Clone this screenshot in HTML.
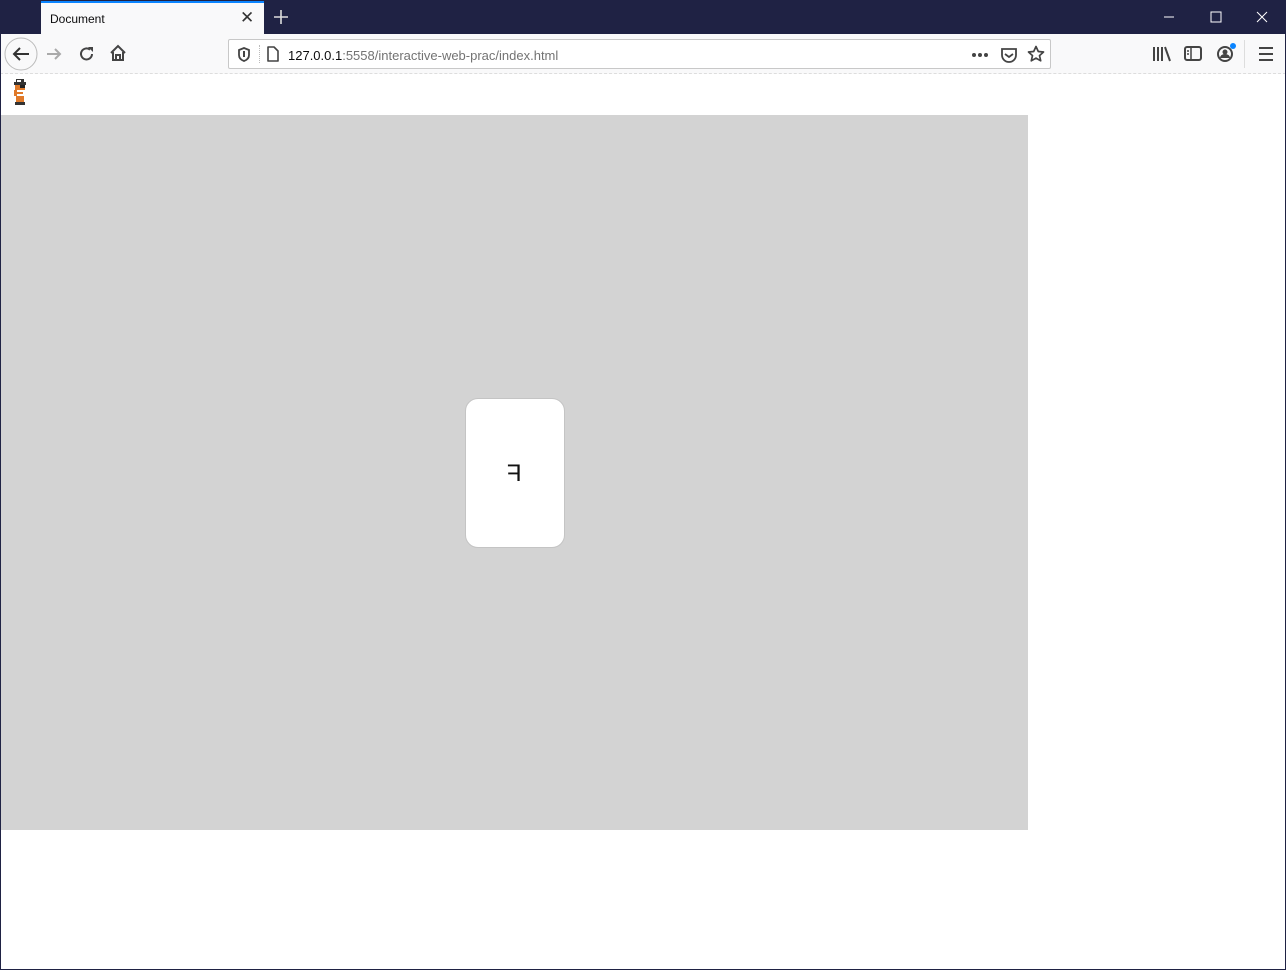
<!DOCTYPE html>
<html><head><meta charset="utf-8"><style>
*{margin:0;padding:0;box-sizing:border-box}
html,body{width:1286px;height:970px;overflow:hidden;background:#fff;font-family:"Liberation Sans",sans-serif}
.win{position:absolute;left:0;top:0;width:1286px;height:970px}
.frame{position:absolute;left:0;top:0;width:1286px;height:970px;border:1px solid #1f2244;pointer-events:none}
.title{position:absolute;left:0;top:0;width:1286px;height:34px;background:#1f2244}
.tab{position:absolute;left:41px;top:1px;width:223px;height:33px;background:#f9f9fa;border-top:2px solid #0a84ff}
.tab span{position:absolute;left:9px;top:9px;font-size:12px;color:#0c0c0d}
.tab .x{position:absolute;left:199px;top:5px;font-size:17px;color:#333;font-weight:normal}
.toolbar{position:absolute;left:0;top:34px;width:1286px;height:40px;background:#f9f9fa;border-bottom:1px dashed #ddd}
.url{position:absolute;left:228px;top:39px;width:823px;height:30px;background:#fff;border:1px solid #c8c8c8;border-radius:2px}
.url .t{position:absolute;left:59px;top:8px;font-size:13px;color:#737373}
.url .t b{font-weight:normal;color:#0c0c0d}
.gray{position:absolute;left:1px;top:115px;width:1027px;height:715px;background:#d3d3d3}
.card{position:absolute;left:464px;top:283px;width:100px;height:150px;background:#fff;border-radius:13px;border:1px solid #c4c4c4}
.card span{position:absolute;left:41px;top:61px;font-size:24px;transform:scaleX(-1);color:#111}
svg{position:absolute}
</style></head><body>
<div class="win">
<div class="title">
<div class="tab"><span>Document</span><span class="x">✕</span></div>
<svg style="left:273px;top:9px" width="16" height="16"><path d="M8 1v14M1 8h14" stroke="#ddd" stroke-width="1.6"/></svg>
<svg style="left:1163px;top:12px" width="12" height="10"><path d="M1 5h10" stroke="#fff"/></svg>
<svg style="left:1210px;top:11px" width="12" height="12"><rect x="1" y="1" width="10" height="10" fill="none" stroke="#fff"/></svg>
<svg style="left:1256px;top:11px" width="12" height="12"><path d="M1 1l10 10M11 1L1 11" stroke="#fff"/></svg>
</div>
<div class="toolbar">
<svg style="left:4px;top:3px" width="34" height="34"><circle cx="17" cy="17" r="16" fill="#f9f9fa" stroke="#bbb"/><path d="M25 17H10M16 11l-6 6 6 6" stroke="#333" stroke-width="2" fill="none"/></svg>
<svg style="left:45px;top:11px" width="18" height="18"><path d="M2 9h13M10 4l5 5-5 5" stroke="#aaa" stroke-width="2" fill="none"/></svg>
<svg style="left:78px;top:11px" width="18" height="18"><path d="M14 9a5.5 5.5 0 1 1-2-4.3" stroke="#444" stroke-width="2" fill="none"/><path d="M10 2h5v5z" fill="#444"/></svg>
<svg style="left:109px;top:10px" width="18" height="18"><path d="M2 9L9 2l7 7M4 8v8h10V8M7 16v-5h4v5" stroke="#444" stroke-width="2" fill="none"/></svg>
<svg style="left:1152px;top:11px" width="20" height="18"><path d="M2 2v14M6 2v14M10 2v14M13 2l5 14" stroke="#444" stroke-width="2"/></svg>
<svg style="left:1184px;top:11px" width="18" height="18"><rect x="1" y="2" width="16" height="13" rx="2" fill="none" stroke="#444" stroke-width="2"/><path d="M7 2v13M3 6h2M3 9h2" stroke="#444" stroke-width="1.5"/></svg>
<svg style="left:1216px;top:9px" width="22" height="20"><circle cx="9" cy="11" r="7" fill="none" stroke="#444" stroke-width="2"/><circle cx="9" cy="9" r="2.5" fill="#444"/><path d="M4 15a5 4 0 0 1 10 0" fill="#444"/><circle cx="17" cy="3" r="3" fill="#0a84ff"/></svg>
<div style="position:absolute;left:1244px;top:6px;width:1px;height:28px;background:#ddd"></div>
<svg style="left:1258px;top:12px" width="16" height="16"><path d="M1 2h14M1 8h14M1 14h14" stroke="#444" stroke-width="2"/></svg>
</div>
<div class="url">
<svg style="left:8px;top:7px" width="14" height="16"><path d="M7 1l5 2v5c0 3-2 5-5 6-3-1-5-3-5-6V3z" fill="none" stroke="#444" stroke-width="1.8"/><path d="M7 4v6" stroke="#444" stroke-width="2"/></svg>
<div style="position:absolute;left:30px;top:5px;width:1px;height:18px;border-left:1px dotted #bbb"></div>
<svg style="left:37px;top:6px" width="14" height="17"><path d="M2 1h6l4 4v10H2z" fill="none" stroke="#444" stroke-width="1.6" stroke-linejoin="round"/></svg>
<div class="t"><b>127.0.0.1</b>:5558/interactive-web-prac/index.html</div>
<svg style="left:742px;top:12px" width="18" height="6"><circle cx="3" cy="3" r="2" fill="#444"/><circle cx="9" cy="3" r="2" fill="#444"/><circle cx="15" cy="3" r="2" fill="#444"/></svg>
<svg style="left:771px;top:6px" width="18" height="18"><path d="M2 3h14v6a7 7 0 0 1-14 0z" fill="none" stroke="#444" stroke-width="1.8"/><path d="M5 8l4 3 4-3" fill="none" stroke="#444" stroke-width="1.8"/></svg>
<svg style="left:798px;top:5px" width="18" height="18"><path d="M9 1.5l2.3 5 5.2.5-4 3.6 1.2 5.2L9 13.1l-4.7 2.7 1.2-5.2-4-3.6 5.2-.5z" fill="none" stroke="#444" stroke-width="1.7" stroke-linejoin="round"/></svg>
</div>
<svg style="left:12px;top:79px" width="18" height="28" shape-rendering="crispEdges">
<rect x="4" y="0" width="8" height="3" fill="#333"/><rect x="5" y="1" width="4" height="2" fill="#fff"/>
<rect x="2" y="3" width="12" height="3" fill="#333"/><rect x="3" y="6" width="10" height="5" fill="#e07a2a"/>
<rect x="8" y="6" width="5" height="3" fill="#222"/><rect x="3" y="11" width="10" height="6" fill="#fff"/>
<rect x="2" y="11" width="3" height="6" fill="#e07a2a"/><rect x="5" y="13" width="6" height="2" fill="#e07a2a"/>
<rect x="4" y="17" width="8" height="6" fill="#e07a2a"/><rect x="3" y="23" width="10" height="3" fill="#333"/>
</svg>
<div class="gray"><div class="card"><span>F</span></div></div>
</div>
<div class="frame"></div>
</body></html>
